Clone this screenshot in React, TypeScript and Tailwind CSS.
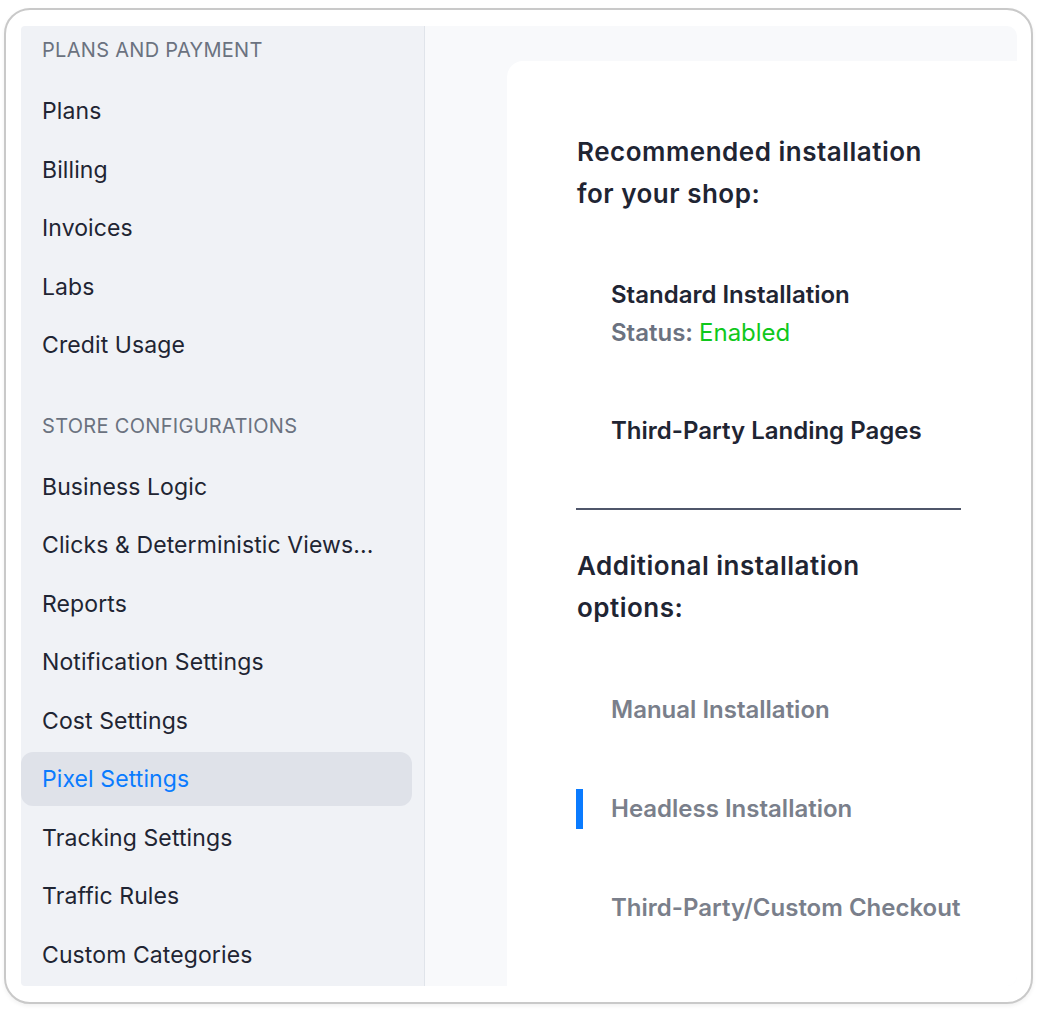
const plans = ['Plans', 'Billing', 'Invoices', 'Labs', 'Credit Usage'];
const store = [
  'Business Logic',
  'Clicks & Deterministic Views...',
  'Reports',
  'Notification Settings',
  'Cost Settings',
  'Pixel Settings',
  'Tracking Settings',
  'Traffic Rules',
  'Custom Categories',
];

const SectionHeader = ({ label }: { label: string }) => (
  <div className="flex h-[48px] items-center px-[21px] text-[20px] uppercase tracking-[0.3px] text-[#6b7280]">
    {label}
  </div>
);

const NavItem = ({ label, active }: { label: string; active?: boolean }) => (
  <div className="flex h-[58.5px] items-center">
    <div
      className={
        active
          ? 'mr-[12px] flex h-[54px] w-full items-center rounded-[12px] bg-[#dfe2e9] px-[21px] text-[23px] tracking-[0.1px] text-[#0a7bff]'
          : 'mr-[12px] flex h-[54px] w-full items-center px-[21px] text-[23px] tracking-[0.1px] text-[#1f2533]'
      }
    >
      {label}
    </div>
  </div>
);

const Option = ({
  title,
  muted,
  active,
  status,
}: {
  title: string;
  muted?: boolean;
  active?: boolean;
  status?: string;
}) => (
  <div className="flex items-center gap-[27px] py-[30px]">
    <div className={active ? '-ml-[1px] mr-[1px] h-[40px] w-[7px] bg-[#0a7bff]' : 'w-[7px]'} />
    <div className="text-[24px] font-semibold leading-[38px]">
      <div className={muted ? 'text-[#7a7f8b]' : 'text-[#1f2533]'}>{title}</div>
      {status && (
        <div>
          <span className="text-[#6b7280]">Status: </span>
          <span className="font-normal text-[#10c81c]">{status}</span>
        </div>
      )}
    </div>
  </div>
);

export default function App() {
  return (
    <div className="h-[1019px] w-[1047px] bg-white pl-[4px] pt-[8px] font-['Inter',sans-serif]">
      <div className="flex h-[996px] w-[1029px] rounded-[26px] border-2 border-[#c9c9c9] bg-white pb-[16px] pl-[15px] pr-[14px] pt-[16px] shadow-[0_2px_4px_rgba(0,0,0,0.06)]">
        <div className="flex flex-1 overflow-hidden rounded-l-[4px] rounded-r-[10px]">
          <aside className="w-[404px] shrink-0 border-r border-[#e0e4ea] bg-[#f0f2f6]">
            <SectionHeader label="Plans and Payment" />
            <div className="mt-[8px]">
              {plans.map((p) => (
                <NavItem key={p} label={p} />
              ))}
            </div>
            <div className="mt-[27px]">
              <SectionHeader label="Store Configurations" />
            </div>
            <div className="mt-[8px]">
              {store.map((s) => (
                <NavItem key={s} label={s} active={s === 'Pixel Settings'} />
              ))}
            </div>
          </aside>
          <main className="flex-1 bg-[#f8f9fb] pl-[82px] pt-[35px]">
            <div className="h-full rounded-tl-[16px] bg-white pl-[70px] pt-[70px]">
              <div className="w-[384px]">
                <h2 className="text-[26px] font-semibold leading-[42px] tracking-[0.5px] text-[#1f2533]">
                  Recommended installation
                  <br />
                  for your shop:
                </h2>
                <div className="mt-[31px]">
                  <Option title="Standard Installation" status="Enabled" />
                  <Option title="Third-Party Landing Pages" />
                </div>
                <div className="-ml-[1px] mt-[28px] h-[2px] bg-[#4f566a]" />
                <h2 className="mt-[35px] text-[26px] font-semibold leading-[42px] tracking-[0.5px] text-[#1f2533]">
                  Additional installation
                  <br />
                  options:
                </h2>
                <div className="mt-[32px]">
                  <Option title="Manual Installation" muted />
                  <Option title="Headless Installation" muted active />
                  <Option title="Third-Party/Custom Checkout" muted />
                </div>
              </div>
            </div>
          </main>
        </div>
      </div>
    </div>
  );
}
